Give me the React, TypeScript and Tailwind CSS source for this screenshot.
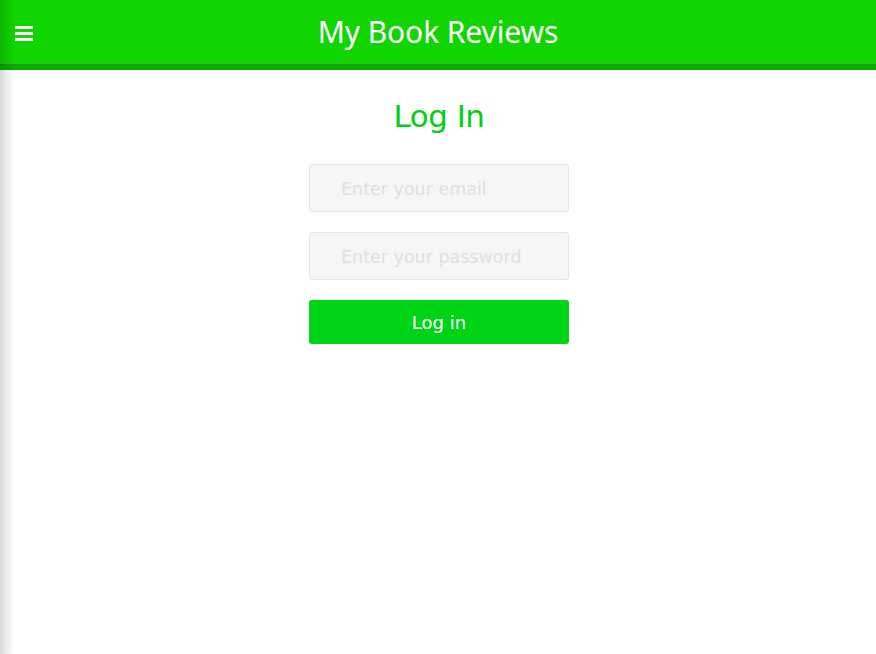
import React from "react";

export default function App() {
  return (
    <div className="relative w-[876px] h-[654px] overflow-hidden bg-white" style={{ fontFamily: '"DejaVu Sans", sans-serif' }}>
      <header className="h-[70px] bg-[#10d500] border-b-[6px] border-[#0ca804] flex items-center relative">
        <button className="absolute left-[15px] top-[26px] flex flex-col gap-[3px]">
          <span className="block w-[18px] h-[3px] bg-white" />
          <span className="block w-[18px] h-[3px] bg-white" />
          <span className="block w-[18px] h-[3px] bg-white" />
        </button>
        <h1 className="w-full text-center text-white text-[30px] leading-none tracking-[-0.1px]" style={{ fontFamily: '"Noto Sans", sans-serif' }}>
          My Book Reviews
        </h1>
      </header>
      <main className="flex flex-col items-center pl-[2px]">
        <h2 className="mt-[26px] text-[31px] leading-[40px] text-[#00d012] tracking-[-0.5px]">Log In</h2>
        <form className="mt-[28px] flex flex-col w-[260px] gap-[20px]">
          <input
            type="email"
            placeholder="Enter your email"
            className="h-[48px] w-full rounded-[3px] border border-[#e6e6e6] bg-[#f6f6f6] pl-[31px] pt-[1px] text-[17.5px] outline-none placeholder:text-[#e0e0e0]"
          />
          <input
            type="password"
            placeholder="Enter your password"
            className="h-[48px] w-full rounded-[3px] border border-[#e6e6e6] bg-[#f6f6f6] pl-[31px] pt-[1px] text-[17.5px] outline-none placeholder:text-[#e0e0e0]"
          />
          <button type="button" className="h-[44px] w-full rounded-[3px] bg-[#00d416] text-white text-[18px]">
            Log in
          </button>
        </form>
      </main>
      <div className="pointer-events-none absolute left-0 top-0 h-full w-[14px] bg-gradient-to-r from-black/15 to-transparent" />
    </div>
  );
}
